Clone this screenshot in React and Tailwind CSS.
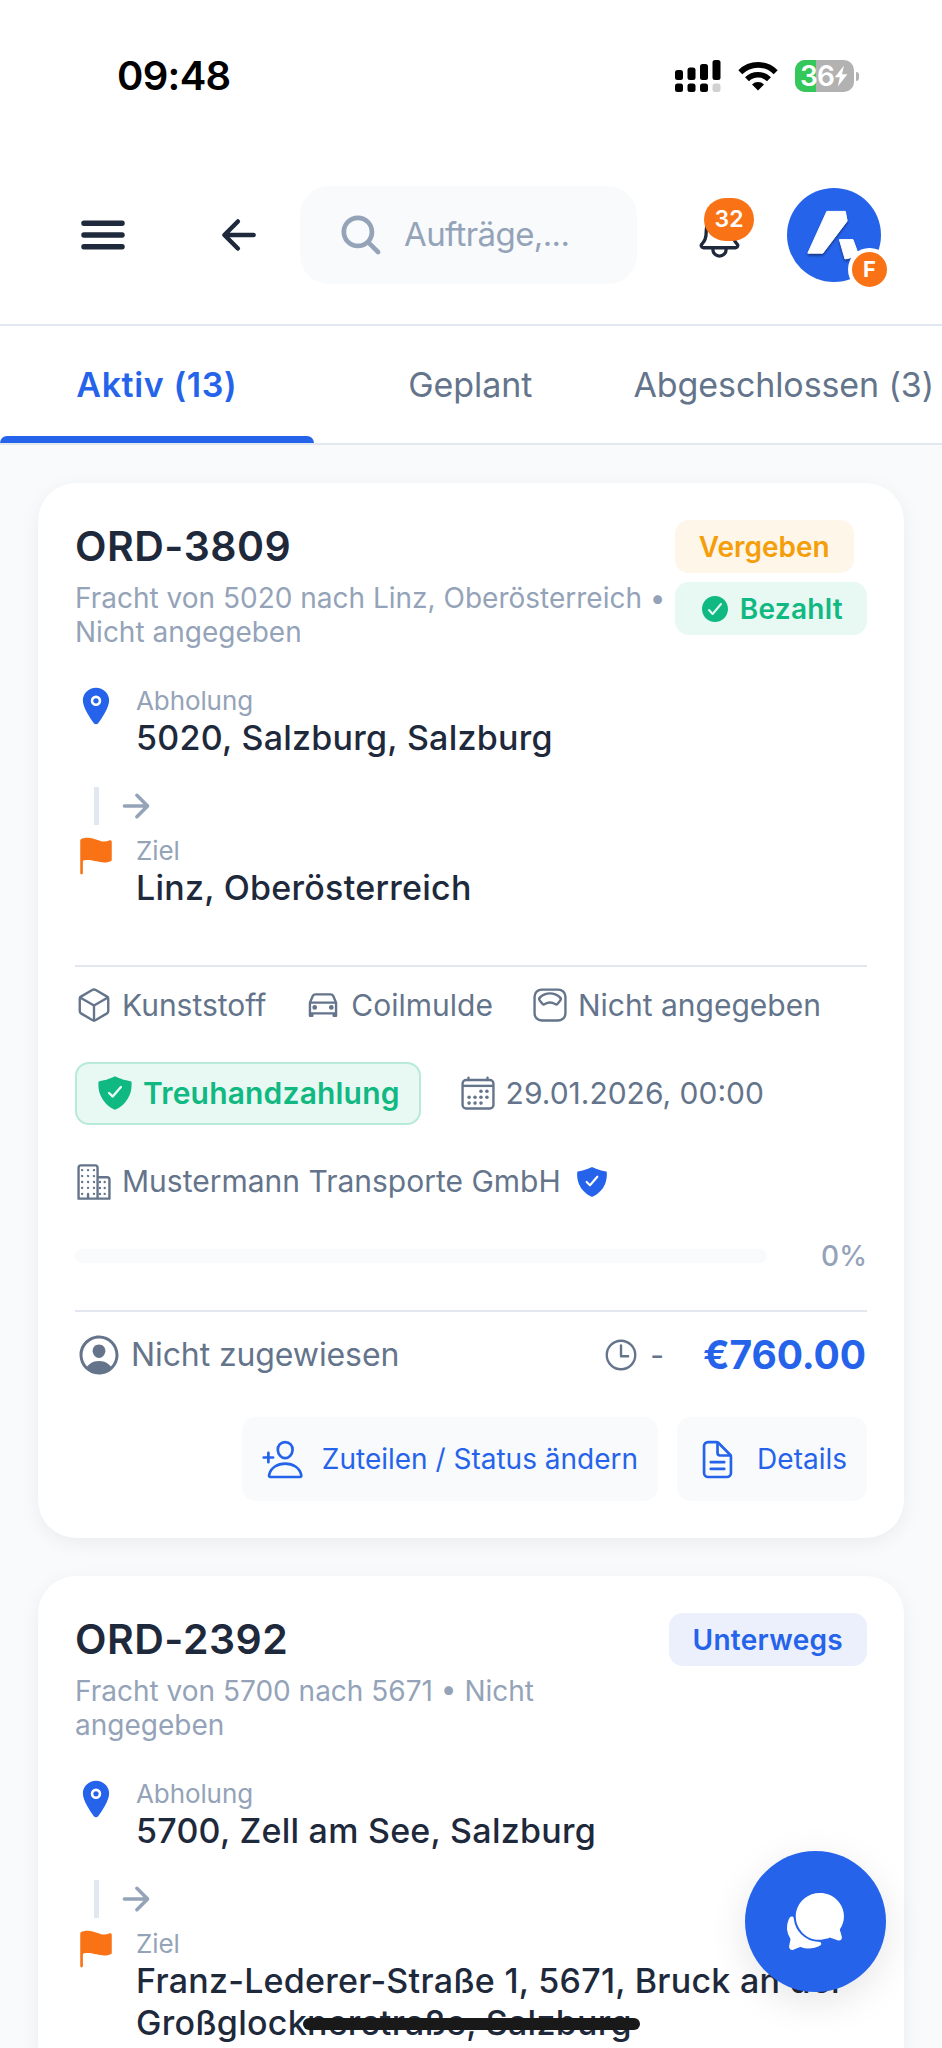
import React, { useState } from "react";
import {
  IoArrowBack,
  IoArrowForward,
  IoBusinessOutline,
  IoCalendarOutline,
  IoCarOutline,
  IoChatbubbles,
  IoCheckmarkCircle,
  IoCubeOutline,
  IoDocumentTextOutline,
  IoFlag,
  IoLocation,
  IoMenu,
  IoNotificationsOutline,
  IoPersonAddOutline,
  IoPersonCircleOutline,
  IoScaleOutline,
  IoSearch,
  IoShieldCheckmark,
  IoTimeOutline,
} from "react-icons/io5";

const tabs = [
  { id: "active", label: "Aktiv (13)" },
  { id: "planned", label: "Geplant" },
  { id: "done", label: "Abgeschlossen (3)" },
];

const orders = [
  {
    id: "ORD-3809",
    subtitle: ["Fracht von 5020 nach Linz, Oberösterreich •", "Nicht angegeben"],
    status: "assigned",
    paid: true,
    from: ["5020, Salzburg, Salzburg"],
    to: ["Linz, Oberösterreich"],
    details: {
      cargo: "Kunststoff",
      vehicle: "Coilmulde",
      weight: "Nicht angegeben",
      date: "29.01.2026, 00:00",
      company: "Mustermann Transporte GmbH",
      progress: 0,
      driver: "Nicht zugewiesen",
      duration: "-",
      price: "€760.00",
    },
  },
  {
    id: "ORD-2392",
    subtitle: ["Fracht von 5700 nach 5671 • Nicht", "angegeben"],
    status: "transit",
    paid: false,
    from: ["5700, Zell am See, Salzburg"],
    to: ["Franz-Lederer-Straße 1, 5671, Bruck an der", "Großglocknerstraße, Salzburg"],
  },
];

const statusStyles = {
  assigned: { label: "Vergeben", className: "bg-[#fef6e9] tracking-normal text-[#f59e0b]" },
  transit: { label: "Unterwegs", className: "bg-[#ebf0fc] tracking-[0.3px] text-[#2563eb]" },
};

const StatusBar = () => (
  <div className="flex h-[145px] items-center justify-between pl-[117px] pr-[83px] pt-[7px] text-black">
    <span className="text-[40px] font-semibold tracking-[-0.7px]">09:48</span>
    <div className="flex items-center">
      <svg width="46" height="33" viewBox="0 0 46 33" className="mr-[17px]">
        <rect x="0" y="10" width="8" height="10" rx="2.5" />
        <rect x="12.5" y="7.5" width="8" height="12.5" rx="2.5" />
        <rect x="25" y="4" width="8" height="16" rx="2.5" />
        <rect x="37.5" y="0" width="8" height="20" rx="2.5" />
        <rect x="0" y="23.5" width="8" height="8.5" rx="2.5" />
        <rect x="12.5" y="23.5" width="8" height="8.5" rx="2.5" />
        <rect x="25" y="23.5" width="8" height="8.5" rx="2.5" />
        <rect x="37.5" y="23.5" width="8" height="8.5" rx="2.5" fill="#d1d1d1" />
      </svg>
      <svg width="40" height="30" viewBox="0 0 40 30" className="mr-[17px]" fill="none" stroke="#000" strokeWidth="5.6">
        <path d="M2.3 11.2a25 25 0 0 1 35.4 0" />
        <path d="M9 18.3a15.6 15.6 0 0 1 22 0" />
        <path d="M20 29.5l-6-6a8.6 8.6 0 0 1 12 0z" fill="#000" stroke="none" />
      </svg>
      <div className="relative flex h-8 w-[59px] items-center overflow-hidden rounded-[10px] bg-[#b2b2b2] pl-[5px]">
        <div className="absolute inset-y-0 left-0 w-[21px] bg-[#34c759]" />
        <span className="relative text-[28px] font-semibold tracking-[-0.8px] text-white">36</span>
        <svg width="14" height="22" viewBox="0 0 14 22" className="relative shrink-0" fill="#fff">
          <path d="M10 0.5L0.8 12.2h5L3.8 21.5 13.4 9.3H8z" />
        </svg>
      </div>
      <div className="ml-[2px] h-[9px] w-[3px] rounded-r-full bg-[#b2b2b2]" />
    </div>
  </div>
);

const Logo = () => (
  <svg width="94" height="94" viewBox="0 0 94 94" className="drop-shadow-[0_2px_1px_rgba(15,30,80,0.6)]">
    <g fill="#fff" stroke="#fff" strokeWidth="1" strokeLinejoin="round">
      <path d="M39.8 23.4H58.4L60.2 33 35.8 65.2H20.8z" />
      <path d="M52.4 51.6H66L72 68 58 71z" />
    </g>
  </svg>
);

const Header = () => (
  <header className="flex h-[179px] items-center pl-[74px] text-[#1e293b]">
    <IoMenu size={58} className="shrink-0" />
    <IoArrowBack size={48} className="ml-[83px] shrink-0" />
    <div className="ml-[37px] flex h-[98px] w-[337px] shrink-0 items-center rounded-[29px] bg-[#f8fafc] pl-[37px] text-[#94a3b8]">
      <IoSearch size={48} />
      <span className="ml-[19px] text-[33px] tracking-[-0.6px]">Aufträge,...</span>
    </div>
    <div className="relative ml-[56px] shrink-0">
      <IoNotificationsOutline size={53} />
      <span className="absolute left-[11px] top-[-10px] flex h-[43px] w-[50px] items-center justify-center rounded-full bg-[#f97316] text-[23px] font-semibold text-white">
        32
      </span>
    </div>
    <div className="relative ml-[41px] h-[94px] w-[94px] shrink-0 rounded-full bg-[#2563eb]">
      <Logo />
      <span className="absolute left-[61px] top-[60px] flex h-[43px] w-[43px] items-center justify-center rounded-full border-[4.5px] border-white bg-[#f97316] text-[22px] font-bold text-white">
        F
      </span>
    </div>
  </header>
);

const Tabs = ({ active, onChange }) => (
  <nav className="flex h-[121px] border-y-2 border-[#e2e8f0] text-[34px]">
    {tabs.map((tab) => (
      <button
        key={tab.id}
        onClick={() => onChange(tab.id)}
        className={`flex w-[313.5px] shrink-0 flex-col whitespace-nowrap ${
          active === tab.id ? "font-semibold tracking-[0.6px] text-[#2563eb]" : "tracking-[-0.1px] text-[#64748b]"
        }`}
      >
        <span className="flex h-[110px] w-full items-center justify-center pt-[6px]">{tab.label}</span>
        {active === tab.id && <span className="h-[7px] w-full rounded-t-[7px] bg-[#2563eb]" />}
      </button>
    ))}
  </nav>
);

const Stop = ({ icon, label, lines }) => (
  <div className="flex">
    {icon}
    <div className="ml-[19px]">
      <p className="text-[26px] leading-8 tracking-[-0.1px] text-[#94a3b8]">{label}</p>
      {lines.map((line) => (
        <p key={line} className="whitespace-nowrap text-[34px] font-medium leading-[42px] tracking-[0.25px] text-[#1e293b]">
          {line}
        </p>
      ))}
    </div>
  </div>
);

const Meta = ({ icon: Icon, children }) => (
  <div className="flex h-[38px] items-center gap-[9px]">
    <Icon size={38} />
    <span>{children}</span>
  </div>
);

const ActionButton = ({ icon: Icon, children }) => (
  <button className="flex h-[84px] items-center gap-[18px] rounded-[14px] bg-[#f8fafc] pl-[19px] pr-5 text-[28px] text-[#2563eb]">
    <Icon size={43} />
    <span>{children}</span>
  </button>
);

const OrderDetails = ({ details }) => (
  <>
    <div className="mt-14 flex flex-wrap items-center gap-[38px] border-t-2 border-[#e2e8f0] pt-[19px] text-[30px] text-[#64748b]">
      <Meta icon={IoCubeOutline}>{details.cargo}</Meta>
      <Meta icon={IoCarOutline}>{details.vehicle}</Meta>
      <Meta icon={IoScaleOutline}>{details.weight}</Meta>
      <div className="flex h-[62.5px] items-center gap-[9px] rounded-[14px] border-2 border-[#b9ead9] bg-[#e8f8f3] px-[19px] font-semibold tracking-[0.17px] text-[#10b981]">
        <IoShieldCheckmark size={38} />
        <span>Treuhandzahlung</span>
      </div>
      <Meta icon={IoCalendarOutline}>{details.date}</Meta>
      <div className="flex w-full items-center">
        <Meta icon={IoBusinessOutline}>{details.company}</Meta>
        <IoShieldCheckmark size={34} className="ml-[14px] text-[#2563eb]" />
      </div>
    </div>

    <div className="mt-[38px] flex h-[34px] items-center justify-between">
      <div className="h-[14px] w-[692px] overflow-hidden rounded-full bg-[#f8fafc]">
        <div className="h-full bg-[#2563eb]" style={{ width: `${details.progress}%` }} />
      </div>
      <span className="text-[28px] font-medium text-[#94a3b8]">{details.progress}%</span>
    </div>

    <div className="mt-[37.5px] flex items-center border-t-2 border-[#e2e8f0] pt-[19px] text-[#64748b]">
      <IoPersonCircleOutline size={48} />
      <span className="ml-[8px] text-[32px] tracking-[-0.1px]">{details.driver}</span>
      <IoTimeOutline size={38} className="ml-auto" />
      <span className="ml-[10px] text-[30px]">{details.duration}</span>
      <span className="ml-[39px] pr-px text-[39px] font-bold leading-[48px] tracking-[-0.1px] text-[#2563eb]">
        {details.price}
      </span>
    </div>

    <div className="mt-[38px] flex justify-end gap-[19px]">
      <ActionButton icon={IoPersonAddOutline}>Zuteilen / Status ändern</ActionButton>
      <ActionButton icon={IoDocumentTextOutline}>Details</ActionButton>
    </div>
  </>
);

const OrderCard = ({ order }) => {
  const status = statusStyles[order.status];

  return (
    <article className="rounded-[38px] bg-white p-[37px] shadow-[0_5px_20px_rgba(0,0,0,0.06)]">
      <div className="flex justify-between whitespace-nowrap">
        <div>
          <h2 className="text-[41px] font-semibold leading-[52px] tracking-[0.5px] text-[#1e293b]">{order.id}</h2>
          <p className="mt-[9px] text-[28px] leading-[34px] text-[#94a3b8]">
            {order.subtitle.map((line) => (
              <span key={line} className="block">
                {line}
              </span>
            ))}
          </p>
        </div>
        <div className="flex flex-col items-start gap-[9px] text-[28px] font-semibold">
          <span className={`flex h-[53px] items-center rounded-[14px] px-6 ${status.className}`}>{status.label}</span>
          {order.paid && (
            <span className="flex h-[53px] items-center gap-[9px] rounded-[14px] bg-[#e8f8f3] px-6 tracking-[0.3px] text-[#10b981]">
              <IoCheckmarkCircle size={32} />
              Bezahlt
            </span>
          )}
        </div>
      </div>

      <div className="mt-9">
        <Stop icon={<IoLocation size={42} className="text-[#2563eb]" />} label="Abholung" lines={order.from} />
        <div className="mb-[10px] mt-7 flex h-[38px] items-center pl-[19px]">
          <div className="h-full w-[5px] bg-[#e2e8f0]" />
          <IoArrowForward size={38} className="ml-[18px] text-[#94a3b8]" />
        </div>
        <Stop icon={<IoFlag size={42} className="text-[#f97316]" />} label="Ziel" lines={order.to} />
      </div>

      {order.details && <OrderDetails details={order.details} />}
    </article>
  );
};

const App = () => {
  const [active, setActive] = useState("active");

  return (
    <div className="relative h-[2048px] w-[942px] overflow-hidden bg-[#f8fafc] font-['Inter',sans-serif]">
      <div className="bg-white">
        <StatusBar />
        <Header />
        <Tabs active={active} onChange={setActive} />
      </div>

      <main className="flex flex-col gap-[38px] px-[38px] pt-[38px]">
        {orders.map((order) => (
          <OrderCard key={order.id} order={order} />
        ))}
      </main>

      <button className="absolute left-[745px] top-[1851px] flex h-[141px] w-[141px] items-center justify-center rounded-full bg-[#2563eb] text-white shadow-[0_10px_38px_rgba(0,0,0,0.1)]">
        <IoChatbubbles size={65} />
      </button>
      <div className="absolute left-[303px] top-[2018px] h-3 w-[337px] rounded-full bg-[#191919]" />
    </div>
  );
};

export default App;
